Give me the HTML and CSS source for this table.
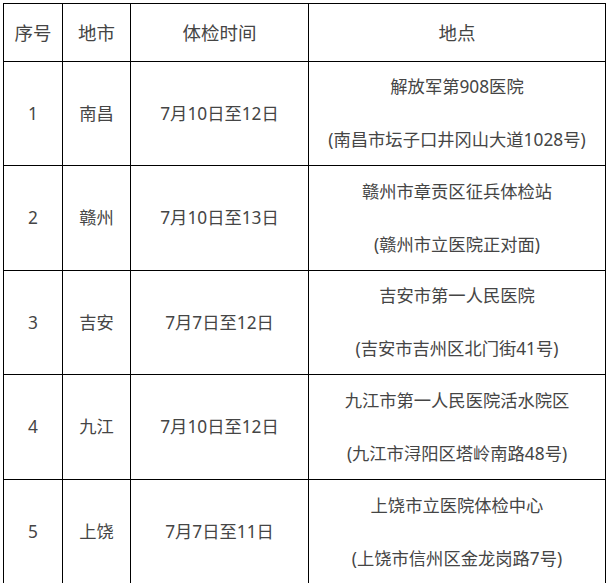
FILE: index.html
```html
<!DOCTYPE html>
<html lang="zh-CN">
<head>
<meta charset="utf-8">
<title>体检安排</title>
<link rel="stylesheet" href="styles.css">
</head>
<body>
<div class="grid">
  <div class="cell head">序号</div>
  <div class="cell head">地市</div>
  <div class="cell head">体检时间</div>
  <div class="cell head">地点</div>

  <div class="cell row">1</div>
  <div class="cell row">南昌</div>
  <div class="cell row">7月10日至12日</div>
  <div class="cell row place"><span>解放军第908医院</span><span>(南昌市坛子口井冈山大道1028号)</span></div>

  <div class="cell row">2</div>
  <div class="cell row">赣州</div>
  <div class="cell row">7月10日至13日</div>
  <div class="cell row place"><span>赣州市章贡区征兵体检站</span><span>(赣州市立医院正对面)</span></div>

  <div class="cell row">3</div>
  <div class="cell row">吉安</div>
  <div class="cell row">7月7日至12日</div>
  <div class="cell row place"><span>吉安市第一人民医院</span><span>(吉安市吉州区北门街41号)</span></div>

  <div class="cell row">4</div>
  <div class="cell row">九江</div>
  <div class="cell row">7月10日至12日</div>
  <div class="cell row place"><span>九江市第一人民医院活水院区</span><span>(九江市浔阳区塔岭南路48号)</span></div>

  <div class="cell row">5</div>
  <div class="cell row">上饶</div>
  <div class="cell row">7月7日至11日</div>
  <div class="cell row place"><span>上饶市立医院体检中心</span><span>(上饶市信州区金龙岗路7号)</span></div>
</div>
</body>
</html>
```

FILE: styles.css
```css
html, body {
  margin: 0;
  padding: 0;
  background: #ffffff;
}
body {
  padding: 3px 0 0 3px;
  font-family: "Noto Sans", "Noto Sans CJK SC", sans-serif;
  font-size: 17.3px;
  color: #454545;
}
.grid {
  display: grid;
  width: 601px;
  grid-template-columns: 58px 67px 177px 296px;
  grid-template-rows: 57px 103px 104px 103px 104px 104px;
  gap: 1px;
  padding: 1px;
  background: #000000;
}
.cell {
  background: #ffffff;
  display: flex;
  align-items: center;
  justify-content: center;
  text-align: center;
  line-height: 26px;
  white-space: nowrap;
}
.head {
  font-size: 18.5px;
}
.place {
  flex-direction: column;
  gap: 27px;
}
```
